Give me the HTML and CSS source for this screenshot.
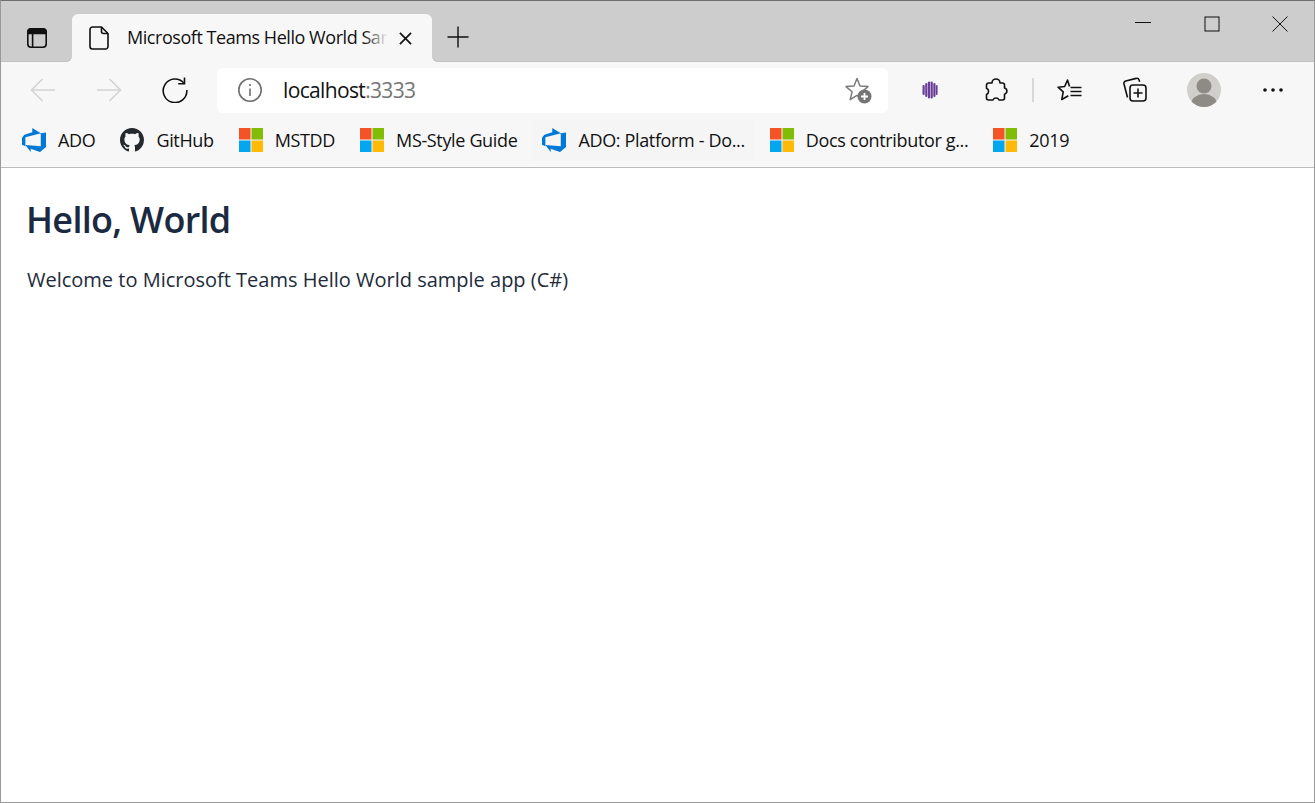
FILE: index.html

```html
<!DOCTYPE html>
<html lang="en">
<head>
  <meta charset="UTF-8">
  <title>Microsoft Teams Hello World Sample</title>
  <link rel="stylesheet" href="styles.css">
</head>
<body>
<div class="window">

  <div class="tabbar">
    <div class="tab-actions">
      <svg class="icon" width="24" height="24" viewBox="0 0 24 24" fill="none" stroke="#111" stroke-width="1.6">
        <rect x="2.800" y="2.800" width="18.400" height="18.400" rx="3.200"/>
        <path d="M3 7.500V6a3 3 0 0 1 3-3h12a3 3 0 0 1 3 3v1.500z" fill="#111"/>
        <path d="M7.600 7.500v13.500"/>
      </svg>
    </div>
    <div class="tab">
      <svg class="icon" width="24" height="24" viewBox="0 0 24 24" fill="none" stroke="#111" stroke-width="1.6" stroke-linejoin="round">
        <path d="M5.500 1h9l6.500 6.500v13a2.500 2.500 0 0 1-2.500 2.500h-13A2.500 2.500 0 0 1 3 20.500v-17A2.500 2.500 0 0 1 5.500 1z"/>
        <path d="M14.500 1v4.500a2 2 0 0 0 2 2H21"/>
      </svg>
      <span class="tab-title">Microsoft Teams Hello World Sample</span>
      <svg class="icon tab-close" width="13" height="13" viewBox="0 0 14 14" stroke="#111" stroke-width="1.8">
        <path d="M1 1l12 12M13 1L1 13"/>
      </svg>
    </div>
    <div class="strip-rest">
      <svg class="icon new-tab" width="22" height="22" viewBox="0 0 22 22" stroke="#111" stroke-width="1.4">
        <path d="M11 0.500v21M0.500 11h21"/>
      </svg>
      <div class="win-controls">
        <svg class="icon" width="16" height="16" viewBox="0 0 16 16" stroke="#111" stroke-width="1"><path d="M0 6.500h16"/></svg>
        <svg class="icon" width="16" height="16" viewBox="0 0 16 16" fill="none" stroke="#111" stroke-width="1"><rect x="1" y="1" width="14" height="14"/></svg>
        <svg class="icon" width="16" height="16" viewBox="0 0 16 16" stroke="#111" stroke-width="1"><path d="M.5 .5l15 15M15.500 .5l-15 15"/></svg>
      </div>
    </div>
  </div>

  <div class="toolbar">
    <div class="nav-buttons">
      <svg class="icon" width="26" height="24" viewBox="0 0 26 24" fill="none" stroke="#d3d3d3" stroke-width="1.6"><path d="M1 12h24M12.500 1L1.500 12l11 11"/></svg>
      <svg class="icon" width="26" height="24" viewBox="0 0 26 24" fill="none" stroke="#d3d3d3" stroke-width="1.6"><path d="M25 12H1M13.500 1l11 11-11 11"/></svg>
      <svg class="icon" width="26" height="26" viewBox="0 0 26 26" fill="none" stroke="#111" stroke-width="1.6"><path d="M21.700 5.800A11.800 11.800 0 1 0 24.800 13"/><path d="M22.500 0.500v6.300h-6.300"/></svg>
    </div>
    <div class="address">
      <svg class="icon" width="26" height="26" viewBox="0 0 26 26" fill="none" stroke="#6f6f6f" stroke-width="1.6">
        <circle cx="13" cy="13" r="11.200"/>
        <path d="M13 11.500v7.500M13 7v2"/>
      </svg>
      <span class="url">localhost<span class="url-port">:3333</span></span>
      <svg class="icon fav-add" width="28" height="28" viewBox="0 0 28 28">
        <path d="M13 2.500l3 7.500 8 .6-6.100 5.200 1.900 7.800-6.800-4.200-6.800 4.200 1.900-7.800L2 10.600l8-.6z" fill="none" stroke="#7a7a7a" stroke-width="1.500" stroke-linejoin="round"/>
        <circle cx="20.500" cy="20.500" r="7" fill="#757575"/>
        <path d="M20.500 17v7M17 20.500h7" stroke="#fff" stroke-width="1.800"/>
      </svg>
    </div>
    <div class="tools">
      <svg class="icon tool-ext" width="16" height="18" viewBox="0 0 16 18" fill="#6b3e99">
        <rect x="0.500" y="4" width="2.200" height="10" rx="1.100"/>
        <rect x="3.200" y="2" width="2.200" height="14" rx="1.100"/>
        <rect x="5.900" y="0.500" width="2.200" height="17" rx="1.100"/>
        <rect x="8.600" y="0.500" width="2.200" height="17" rx="1.100"/>
        <rect x="11.300" y="2" width="2.200" height="14" rx="1.100"/>
        <rect x="13.800" y="4" width="1.800" height="10" rx="0.900"/>
      </svg>
      <svg class="icon tool-puzzle" width="24" height="24" viewBox="0 0 24 24" fill="none" stroke="#111" stroke-width="1.600" stroke-linejoin="round">
        <path d="M8 5a4 4 0 0 1 8 0h2.500a2 2 0 0 1 2 2v3a3.200 3.200 0 0 1 0 6.200V20a2 2 0 0 1-2 2H15a3.300 3.300 0 0 0-6 0H4.500a2 2 0 0 1-2-2v-3.500a3.400 3.400 0 0 0 0-6.300V7a2 2 0 0 1 2-2z"/>
      </svg>
      <span class="tool-sep"></span>
      <svg class="icon tool-favs" width="26" height="24" viewBox="0 0 26 24" fill="none" stroke="#111" stroke-width="1.600" stroke-linejoin="round">
        <path d="M12.500 8.500L10.500 2 7.700 8.500 1 9.200l5.200 4.600L4.800 21.500l6.500-3.700"/>
        <path d="M13.500 9.500h11M13.500 13.500h11M13.500 17.500h11"/>
      </svg>
      <svg class="icon tool-coll" width="26" height="26" viewBox="0 0 26 26" fill="none" stroke="#111" stroke-width="1.600" stroke-linejoin="round">
        <path d="M5.500 20.500L2 7a2.400 2.400 0 0 1 1.700-3l10.500-2.600a2.400 2.400 0 0 1 2.900 1.500l.5 2"/>
        <rect x="8" y="8" width="16" height="16" rx="3"/>
        <path d="M16 11.500v9M11.500 16h9"/>
      </svg>
      <svg class="icon tool-avatar" width="34" height="34" viewBox="0 0 34 34">
        <clipPath id="avatarClip"><circle cx="17" cy="17" r="17"/></clipPath>
        <circle cx="17" cy="17" r="17" fill="#d1cfcb"/>
        <g clip-path="url(#avatarClip)" fill="#8e8a86">
          <circle cx="17" cy="13" r="7.500"/>
          <ellipse cx="17" cy="31" rx="13" ry="10"/>
        </g>
      </svg>
      <svg class="icon tool-more" width="20" height="6" viewBox="0 0 20 6" fill="#111">
        <circle cx="2" cy="3" r="1.800"/><circle cx="10" cy="3" r="1.800"/><circle cx="18" cy="3" r="1.800"/>
      </svg>
    </div>
  </div>

  <div class="bookmarks">
    <div class="bookmark">
      <svg class="icon" width="24" height="24" viewBox="1 1 16 16" fill="#0078d7"><path d="M17 4v9.740l-4 3.280-6.200-2.260V17l-3.510-4.590 10.230.8V4.440zm-3.410.49L7.850 1v2.900L2.580 5.450 1 7.500v4.660l2.260 1V7.200z"/></svg>
      <span>ADO</span>
    </div>
    <div class="bookmark">
      <svg class="icon" width="24" height="24" viewBox="0 0 16 16" fill="#24292e"><path d="M8 0C3.580 0 0 3.580 0 8c0 3.540 2.290 6.530 5.470 7.590.4.070.55-.17.55-.38 0-.19-.01-.82-.01-1.490-2.010.37-2.530-.49-2.690-.94-.09-.23-.48-.94-.82-1.130-.28-.15-.68-.52-.01-.53.63-.01 1.080.58 1.230.82.720 1.210 1.870.87 2.330.66.070-.52.280-.87.510-1.070-1.780-.2-3.640-.89-3.640-3.950 0-.87.310-1.590.820-2.150-.08-.2-.36-1.020.08-2.120 0 0 .67-.21 2.200.82.640-.18 1.320-.27 2-.27s1.360.09 2 .27c1.530-1.040 2.200-.82 2.200-.82.440 1.100.16 1.920.08 2.120.51.560.82 1.270.82 2.150 0 3.070-1.870 3.750-3.650 3.950.29.250.54.730.54 1.480 0 1.070-.01 1.930-.01 2.200 0 .21.150.46.550.38A8.013 8.013 0 0 0 16 8c0-4.420-3.580-8-8-8z"/></svg>
      <span>GitHub</span>
    </div>
    <div class="bookmark">
      <svg class="icon" width="24" height="24" viewBox="0 0 24 24"><rect width="11.500" height="11.500" fill="#f35325"/><rect x="12.500" width="11.500" height="11.500" fill="#81bc06"/><rect y="12.500" width="11.500" height="11.500" fill="#05a6f0"/><rect x="12.500" y="12.500" width="11.500" height="11.500" fill="#ffba08"/></svg>
      <span>MSTDD</span>
    </div>
    <div class="bookmark">
      <svg class="icon" width="24" height="24" viewBox="0 0 24 24"><rect width="11.500" height="11.500" fill="#f35325"/><rect x="12.500" width="11.500" height="11.500" fill="#81bc06"/><rect y="12.500" width="11.500" height="11.500" fill="#05a6f0"/><rect x="12.500" y="12.500" width="11.500" height="11.500" fill="#ffba08"/></svg>
      <span>MS-Style Guide</span>
    </div>
    <div class="bookmark bookmark-hover">
      <svg class="icon" width="24" height="24" viewBox="1 1 16 16" fill="#0078d7"><path d="M17 4v9.740l-4 3.280-6.200-2.260V17l-3.510-4.590 10.230.8V4.440zm-3.410.49L7.850 1v2.900L2.580 5.450 1 7.500v4.660l2.260 1V7.200z"/></svg>
      <span>ADO: Platform - Do...</span>
    </div>
    <div class="bookmark">
      <svg class="icon" width="24" height="24" viewBox="0 0 24 24"><rect width="11.500" height="11.500" fill="#f35325"/><rect x="12.500" width="11.500" height="11.500" fill="#81bc06"/><rect y="12.500" width="11.500" height="11.500" fill="#05a6f0"/><rect x="12.500" y="12.500" width="11.500" height="11.500" fill="#ffba08"/></svg>
      <span>Docs contributor g...</span>
    </div>
    <div class="bookmark">
      <svg class="icon" width="24" height="24" viewBox="0 0 24 24"><rect width="11.500" height="11.500" fill="#f35325"/><rect x="12.500" width="11.500" height="11.500" fill="#81bc06"/><rect y="12.500" width="11.500" height="11.500" fill="#05a6f0"/><rect x="12.500" y="12.500" width="11.500" height="11.500" fill="#ffba08"/></svg>
      <span>2019</span>
    </div>
  </div>

  <main class="content">
    <h1>Hello, World</h1>
    <p>Welcome to Microsoft Teams Hello World sample app (C#)</p>
  </main>

</div>
</body>
</html>
```

FILE: styles.css

```css
html, body { margin: 0; height: 100%; }
body { font-family: "Open Sans", "Noto Sans", sans-serif; background: #fff; color: #111; }
.window { height: 803px; box-sizing: border-box; border: 1px solid #9a9a9a; border-top-color: #6e6e6e; overflow: hidden; display: flex; flex-direction: column; }
.icon { display: block; flex: none; }

/* tab strip */
.tabbar { height: 61px; flex: none; display: flex; background: linear-gradient(#cdcdcd 50%, #f7f7f7 50%); }
.tab-actions { width: 71px; padding-top: 13px; box-sizing: border-box; background: #cdcdcd; border-bottom-right-radius: 6px; box-shadow: inset 0 -1px #c2c2c2; display: flex; align-items: center; justify-content: center; }
.tab { width: 360px; margin-top: 13px; background: #f7f7f7; border-radius: 6px 6px 0 0; display: flex; align-items: center; padding-left: 15px; box-sizing: border-box; position: relative; }
.tab-title { width: 261px; margin-left: 16px; padding-bottom: 2px; font-size: 18px; white-space: nowrap; overflow: hidden; letter-spacing: -0.45px; }
.tab::after { content: ""; position: absolute; left: 292px; top: 8px; width: 24px; height: 32px; background: linear-gradient(to right, rgba(247,247,247,0), #f7f7f7); }
.tab-close { margin-left: 11px; }
.strip-rest { flex: 1; background: #cdcdcd; border-bottom-left-radius: 6px; box-shadow: inset 0 -1px #c2c2c2; display: flex; align-items: flex-start; }
.new-tab { margin: 25px 0 0 15px; }
.win-controls { margin-left: auto; margin-top: 15px; margin-right: 26px; display: flex; gap: 52.5px; }

/* address row */
.toolbar { height: 56px; flex: none; background: #f7f7f7; display: flex; align-items: center; }
.nav-buttons { display: flex; align-items: center; gap: 40px; width: 216px; padding-left: 29px; box-sizing: border-box; }
.address { width: 671px; height: 45px; background: #fff; border-radius: 6px; display: flex; align-items: center; padding-left: 20px; padding-right: 16px; box-sizing: border-box; }
.url { margin-left: 20px; font-size: 21px; letter-spacing: -0.65px; }
.url-port { color: #767676; }
.fav-add { margin-left: auto; }
.tools { display: flex; align-items: center; }
.tool-ext { margin-left: 34px; }
.tool-puzzle { margin-left: 46px; }
.tool-sep { width: 2px; height: 24px; background: #d8d8d8; margin-left: 24px; }
.tool-favs { margin-left: 23px; }
.tool-coll { margin-left: 39px; }
.tool-avatar { margin-left: 39px; }
.tool-more { margin-left: 42px; }

/* bookmarks */
.bookmarks { height: 50px; flex: none; background: #f7f7f7; border-bottom: 1px solid #bcbcbc; display: flex; align-items: center; gap: 25px; padding-left: 21px; padding-bottom: 5px; box-sizing: border-box; }
.bookmark { display: flex; align-items: center; gap: 12px; font-size: 18px; letter-spacing: -0.35px; white-space: nowrap; }
.bookmark-hover { background: #f5f5f5; margin: 0 -8px 0 -10px; padding: 9px 8px 9px 10px; }

/* page */
.content { flex: 1; background: #fff; padding: 30px 26px 0; color: #212b3b; }
h1 { margin: 0 0 25px -1px; font-size: 36px; font-weight: 600; line-height: 1.2; color: #1b2a41; letter-spacing: -0.7px; }
p { margin: 0; font-size: 20px; }
```
